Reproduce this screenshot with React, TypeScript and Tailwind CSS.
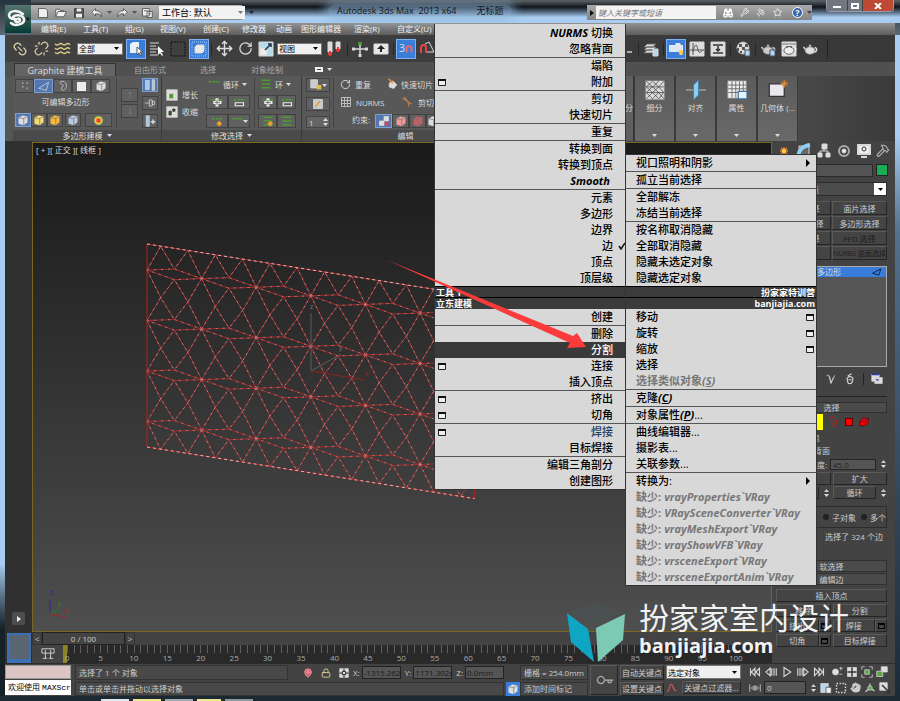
import React from 'react';
import { Star, Wrench, Binoculars, Satellite, Link2, Unlink, Move, RotateCw, MapPin, Lock, Hand, Hammer, Key, Waves } from 'lucide-react';

interface MenuEntry {
  label: string;
  latin?: string;
  hotkey?: string;
  tail?: string;
  box?: boolean;
  arrow?: boolean;
  check?: boolean;
  active?: boolean;
  disabled?: boolean;
  tone?: string;
}

const menuItems = [
  { label: '编辑(E)', width: 'w-[42px]' },
  { label: '工具(T)', width: 'w-[42px]' },
  { label: '组(G)', width: 'w-[35px]' },
  { label: '视图(V)', width: 'w-[43px]' },
  { label: '创建(C)', width: 'w-[39px]' },
  { label: '修改器', width: 'w-[34px]' },
  { label: '动画', width: 'w-[25px]' },
  { label: '图形编辑器', width: 'w-[53px]' },
  { label: '渲染(R)', width: 'w-[43px]' },
  { label: '自定义(U)', width: 'w-[43px]' },
];

const leftTop: MenuEntry[][] = [
  [{ label: '切换', latin: 'NURMS' }, { label: '忽略背面' }],
  [{ label: '塌陷' }, { label: '附加', box: true }],
  [{ label: '剪切' }, { label: '快速切片' }],
  [{ label: '重复' }],
  [{ label: '转换到面' }, { label: '转换到顶点' }, { label: '', latin: 'Smooth' }],
  [
    { label: '元素' },
    { label: '多边形' },
    { label: '边界' },
    { label: '边', check: true },
    { label: '顶点' },
    { label: '顶层级' },
  ],
];

const leftBottom: MenuEntry[][] = [
  [{ label: '创建' }],
  [{ label: '删除' }, { label: '分割', active: true }, { label: '连接', box: true }, { label: '插入顶点' }],
  [{ label: '挤出', box: true }, { label: '切角', box: true }],
  [{ label: '焊接', box: true, tone: 'text-[#24405e]' }, { label: '目标焊接' }],
  [{ label: '编辑三角剖分' }, { label: '创建图形' }],
];

const rightTop: MenuEntry[][] = [
  [{ label: '视口照明和阴影', arrow: true }],
  [{ label: '孤立当前选择' }],
  [{ label: '全部解冻' }, { label: '冻结当前选择' }],
  [{ label: '按名称取消隐藏' }, { label: '全部取消隐藏' }, { label: '隐藏未选定对象' }, { label: '隐藏选定对象' }],
];

const rightBottom: MenuEntry[][] = [
  [
    { label: '移动', box: true },
    { label: '旋转', box: true },
    { label: '缩放', box: true },
    { label: '选择' },
    { label: '选择类似对象', hotkey: 'S', disabled: true },
  ],
  [{ label: '克隆', hotkey: 'C' }],
  [{ label: '对象属性', hotkey: 'P', tail: '...' }],
  [{ label: '曲线编辑器...' }, { label: '摄影表...' }, { label: '关联参数...' }],
  [
    { label: '转换为:', arrow: true },
    { label: '缺少:', latin: 'vrayProperties`VRay', disabled: true },
    { label: '缺少:', latin: 'VRaySceneConverter`VRay', disabled: true },
    { label: '缺少:', latin: 'vrayMeshExport`VRay', disabled: true },
    { label: '缺少:', latin: 'vrayShowVFB`VRay', disabled: true },
    { label: '缺少:', latin: 'vrsceneExport`VRay', disabled: true },
    { label: '缺少:', latin: 'vrsceneExportAnim`VRay', disabled: true },
  ],
];

const Ico: React.FC<{ children: React.ReactNode; size?: string }> = ({ children, size = 'size-4' }) => (
  <svg viewBox="0 0 16 16" className={`${size} shrink-0`} fill="none" stroke="#d8d8d8" strokeWidth="1">
    {children}
  </svg>
);

const Tool: React.FC<{ name: string; active?: boolean; children: React.ReactNode }> = ({ name, active, children }) => (
  <button
    aria-label={name}
    className={`flex h-[20px] w-[20px] shrink-0 items-center justify-center ${
      active ? 'border border-[#7db2f2] bg-[#3a7edb]' : ''
    }`}
  >
    {children}
  </button>
);

const Sep = () => <div className="mx-[1px] h-3 w-[1px] shrink-0 bg-[#252525]" />;

const Small: React.FC<{ name: string; active?: boolean; className?: string; children?: React.ReactNode }> = ({
  name,
  active,
  className = 'w-[19px]',
  children,
}) => (
  <button
    aria-label={name}
    className={`flex h-[14px] shrink-0 items-center justify-center border ${className} ${
      active ? 'border-[#7f9fd0] bg-[#5577b0]' : 'border-[#424242] bg-[#606060]'
    }`}
  >
    {children}
  </button>
);

const Drop: React.FC<{ label: string; value: string; className: string }> = ({ label, value, className }) => (
  <div className={`flex shrink-0 items-center border border-[#777] bg-[#f0f0f0] text-black ${className}`}>
    <select aria-label={label} className="min-w-0 flex-1 appearance-none bg-transparent pl-[1px] text-[8px] leading-[11px] outline-none">
      <option>{value}</option>
    </select>
    <Caret className="mr-[3px] text-black" />
  </div>
);

const Caret: React.FC<{ className?: string }> = ({ className = 'text-[#ddd]' }) => (
  <svg viewBox="0 0 5 3" className={`h-[3px] w-[5px] shrink-0 ${className}`} fill="currentColor">
    <path d="M0 0h5L2.500 3z" />
  </svg>
);

const Cube: React.FC<{ color?: string }> = ({ color = '#ddd' }) => (
  <Ico size="size-3">
    <path d="M2 5l5-3 7 1v8l-5 4-7-2z" fill={color} stroke="none" />
    <path d="M2 5l7 1 5-3M9 6v9" stroke="#777" />
  </Ico>
);

const EdgeBars: React.FC<{ plus?: boolean; minus?: boolean; rows?: number; spark?: boolean }> = ({ plus, minus, rows = 1, spark }) => (
  <Ico size="size-3">
    {rows === 3 ? (
      <path d="M2 3h12M2 8h12M2 13h12" stroke="#4c9a30" strokeWidth="2" />
    ) : (
      <path d="M1 5h4M6 5h4M11 5h4" stroke="#4c9a30" strokeWidth="2" />
    )}
    {plus && <path d="M8 3v11M3 8.500h11" stroke="#eee" strokeWidth="4" />}
    {plus && <path d="M8 5v7M5 8.500h7" stroke="#555" strokeWidth="1" />}
    {minus && <path d="M3 9h11v4H3z" fill="#555" stroke="#eee" strokeWidth="1.500" />}
    {spark && <path d="M11 8v7M7.500 11.500h7M9 9l4 5M13 9l-4 5" stroke="#f5a030" strokeWidth="1.500" />}
  </Ico>
);

const Pot: React.FC<{ fill?: string; stroke?: string }> = ({ fill = '#ccc', stroke = '#777' }) => (
  <>
    <path d="M12.500 7c3-1 3 4-1 4.500M4 9L1.500 6" stroke={fill} strokeWidth="1.500" />
    <ellipse cx="8" cy="9.500" rx="5" ry="3.800" fill={fill} stroke={stroke} strokeWidth=".7" />
    <path d="M5 6.500c1-1.500 5-1.500 6 0" stroke={stroke} />
    <circle cx="8" cy="4.600" r="1" fill={fill} stroke="none" />
  </>
);

const WindowMark = () => (
  <svg viewBox="0 0 8 7" className="h-[7px] w-2 shrink-0" aria-hidden="true">
    <path d="M.5.5h7v6h-7z" fill="#eee" stroke="#222" />
    <path d="M0 0h8v2H0z" fill="#111" />
  </svg>
);

const Entry: React.FC<{ item: MenuEntry; side: 'left' | 'right' }> = ({ item, side }) => {
  const cjk = item.label && <span className={item.disabled ? 'font-bold' : 'font-medium'}>{item.label}</span>;
  const latin = item.latin && <span className="font-bold italic">{item.latin}</span>;
  const color = item.active ? 'bg-[#3a3a3a] text-white' : item.disabled ? 'text-[#777]' : item.tone || 'text-black';
  return (
    <button
      role="menuitem"
      disabled={item.disabled}
      className={`flex h-4 w-full items-center whitespace-nowrap text-[11px] leading-4 ${color} ${
        side === 'left' ? 'pl-[3px]' : 'pl-[10px] pr-[2px]'
      }`}
    >
      {side === 'left' && item.box && <WindowMark />}
      <span className={`flex flex-1 gap-[3px] ${side === 'left' ? 'justify-end' : ''}`}>
        {side === 'left' && latin}
        <span>
          {cjk}
          {item.hotkey && (
            <span className="font-bold italic">
              (<u>{item.hotkey}</u>)
            </span>
          )}
          {item.tail}
        </span>
        {side === 'right' && latin}
      </span>
      {side === 'left' && (
        <span className="flex w-3 shrink-0 justify-end">
          {item.check && (
            <svg viewBox="0 0 7 8" className="h-2 w-[7px]" fill="none" stroke="#111" strokeWidth="1.500">
              <path d="M1 4l2 3 4-6" />
            </svg>
          )}
        </span>
      )}
      {side === 'right' && item.box && <WindowMark />}
      {side === 'right' && item.arrow && (
        <svg viewBox="0 0 4 8" className="mr-1 h-2 w-1" fill="#000">
          <path d="M0 0l4 4-4 4z" />
        </svg>
      )}
    </button>
  );
};

const Groups: React.FC<{ groups: MenuEntry[][]; side: 'left' | 'right' }> = ({ groups, side }) => (
  <div className="divide-y divide-[#555]">
    {groups.map((group, i) => (
      <div key={i}>
        {group.map((item) => (
          <Entry key={item.label + (item.latin || '')} item={item} side={side} />
        ))}
      </div>
    ))}
  </div>
);

const QuadTitle: React.FC<{ lines: string[]; className?: string }> = ({ lines, className = '' }) => (
  <div className={`divide-y divide-black border-t border-black bg-[#3b3b3b] text-[9px] leading-[11px] font-bold text-white ${className}`}>
    {lines.map((line) => (
      <div key={line} className="h-[11px] px-[1px]">{line}</div>
    ))}
  </div>
);

const TitleBar = () => (
  <div className="flex h-[23px] items-start bg-linear-to-b from-[#555c60] from-5% via-[#10171e] via-30% to-[#a9cdf2] to-75%">
    <div className="mt-[5px] flex h-[15px] w-[213px] items-center gap-[6px] rounded-r bg-linear-to-b from-[#b4b4b4] to-[#8b8b8b] pl-[6px]">
      <Ico size="size-3"><path d="M2 2h9l3 3v9H2z" fill="#eee" stroke="#444" /></Ico>
      <Ico size="size-3"><path d="M1 13l3-7h11l-3 7zM1 12V3h5l1 2h5" fill="#eee" stroke="#444" /></Ico>
      <Ico size="size-3"><path d="M2 2h12v12H2z" fill="#555" stroke="#333" /><path d="M5 2h6v4H5zM4 9h8v5H4z" fill="#eee" stroke="none" /></Ico>
      <Ico size="size-3"><path d="M1 7l5-5v3c5 0 8 2 8 8-2-4-4-4-8-4v3z" fill="#eee" stroke="#444" /></Ico>
      <Caret className="-mx-[2px] text-[#555]" />
      <Ico size="size-3"><path d="M15 7l-5-5v3c-5 0-8 2-8 8 2-4 4-4 8-4v3z" fill="#eee" stroke="#444" /></Ico>
      <Caret className="-mx-[2px] text-[#555]" />
      <Ico size="size-3"><path d="M2 2h9v10H2zM8 6h7v8H8z" fill="#eee" stroke="#444" /><path d="M4 5h5M10 9h3" stroke="#444" /></Ico>
      <div className="ml-auto flex h-[13px] w-[86px] shrink-0 items-center bg-[#f2f2f2] text-black">
        <select aria-label="工作台" className="min-w-0 flex-1 appearance-none bg-transparent pl-[3px] text-[9px] leading-[12px]">
          <option>工作台: 默认</option>
        </select>
        <Caret className="mr-[2px] text-[#777]" />
      </div>
      <Caret className="-ml-[2px] mr-[3px] text-[#222]" />
    </div>
    <div className="mt-[5px] ml-[84px] flex gap-[20px] rounded-full bg-[#8fb4d8]/50 px-[9px] text-[9px] leading-[12px] text-[#101820] shadow-[0_0_8px_4px_rgba(143,180,216,0.5)]">
      <span className="whitespace-pre">Autodesk 3ds Max  2013 x64</span>
      <span>无标题</span>
    </div>
    <div className="mt-[5px] ml-auto flex h-[15px] w-[225px] shrink-0 items-center gap-[7px] bg-linear-to-b from-[#aaa] to-[#858585] text-[#fff]">
      <svg viewBox="0 0 4 6" className="ml-[3px] h-[6px] w-1 shrink-0" fill="#111"><path d="M0 0l4 3-4 3z" /></svg>
      <input aria-label="搜索" placeholder="键入关键字或短语" className="-ml-[5px] h-[13px] w-[120px] shrink-0 bg-[#f4f4f4] px-[2px] text-[8px] italic placeholder:text-[#777]" />
      <Binoculars size={12} strokeWidth={3} />
      <Wrench size={11} />
      <Satellite size={11} />
      <Star size={11} />
      <span className="ml-[3px] flex size-[11px] shrink-0 items-center justify-center rounded-full border border-white bg-[#3763a8] text-[9px] font-bold">?</span>
      <Caret className="-ml-[3px] text-[#444]" />
    </div>
    <div className="mr-[6px] ml-[14px] flex h-3 w-[68px] shrink-0 overflow-hidden rounded-b border border-t-0 border-[#99a]">
      <button aria-label="最小化" className="flex w-5 items-end justify-center bg-[#70777e] pb-[3px]"><i className="h-[2px] w-[8px] bg-white" /></button>
      <button aria-label="还原" className="flex w-4 items-center justify-center border-x border-[#444] bg-[#70777e]"><i className="h-[6px] w-2 border-2 border-white" /></button>
      <button aria-label="关闭" className="flex flex-1 items-center justify-center bg-[#bd4a35]">
        <svg viewBox="0 0 8 6" className="h-[6px] w-2" stroke="#fff" strokeWidth="2"><path d="M1 0l6 6M7 0L1 6" /></svg>
      </button>
    </div>
  </div>
);

const Header = () => (
  <header className="flex bg-linear-to-b from-[#24333d] to-[#5d6972] pl-[5px]">
    <button aria-label="应用程序" className="mt-[5px] flex h-[28px] w-[26px] items-center justify-center bg-linear-to-b from-[#55756f] to-[#023c37]">
      <svg viewBox="0 0 24 24" className="size-6" fill="none" stroke="#f4f4f4" strokeWidth="2.500" strokeLinecap="round">
        <path d="M17 7C12 3 4 3 3 8c0 3 2 4 6 4M7 10c3-3 10-2 11 2 1 5-9 8-13 4M9 14c1 2 5 1 5-1s-4-2-5 1" />
        <path d="M21 11l2 0-1 2z" fill="#111" stroke="#111" strokeWidth="1" />
      </svg>
    </button>
    <div className="min-w-0 flex-1">
      <TitleBar />
      <nav className="mr-[5px] flex h-3 items-center bg-linear-to-b from-[#929292] to-[#5d5d5d] pl-[10px] text-[8px] leading-3 text-[#f4f4f4]">
        {menuItems.map((m) => (
          <button key={m.label} className={`shrink-0 text-left whitespace-nowrap ${m.width}`}>{m.label}</button>
        ))}
      </nav>
    </div>
  </header>
);

const MainToolbar = () => (
  <div className="flex h-[27px] items-center gap-[1px] bg-linear-to-r from-[#414141] to-[#383838] pl-[5px] text-[#ddd]">
    <Tool name="链接"><Link2 size={16} className="rotate-45 text-[#d6cda7]" /></Tool>
    <Tool name="取消链接"><Unlink size={15} className="text-[#d6cda7]" /></Tool>
    <Tool name="绑定"><Waves size={17} className="text-[#e0c887]" /></Tool>
    <Drop label="选择过滤器" value="全部" className="mr-[2px] ml-[4px] h-3 w-[46px]" />
    <Tool name="选择对象" active>
      <Ico><path d="M2 3l3-2h6v9l-2 2H2z" fill="#e8f2fb" stroke="none" /><path d="M9 6v8l2-2 2 3 1-1-2-3h3z" fill="#fff" stroke="#555" /></Ico>
    </Tool>
    <Tool name="按名称选择"><Ico><path d="M1 2h9M1 5h6M1 8h8M1 11h6M1 14h8" /><path d="M9 5v9l2-2 2 3 1-1-2-3h3z" fill="#fff" stroke="none" /></Ico></Tool>
    <Tool name="矩形选择"><Ico><path d="M1 1h14v14H1z" stroke="#111" strokeDasharray="2 1" /></Ico></Tool>
    <Tool name="窗口交叉" active><Ico><path d="M1 1h14v14H1z" stroke="#a8cdf5" strokeDasharray="1 1" /><path d="M4 6l2-2h7v6l-2 2H4z" fill="#e8e8e8" /></Ico></Tool>
    <Sep />
    <Tool name="移动"><Move size={17} /></Tool>
    <Tool name="旋转"><RotateCw size={15} /></Tool>
    <Tool name="缩放"><Ico><path d="M1 1h14v14H1z" fill="#b6dceb" /><path d="M2 7h7v7H2z" fill="#eee" /><path d="M7 9l6-6M10 3h3v3" stroke="#234" strokeWidth="1.500" /></Ico></Tool>
    <Drop label="参考坐标系" value="视图" className="mr-[2px] h-3 w-[45px]" />
    <Tool name="轴心"><Ico><path d="M1 1h4v10H1zM9 1h4v7H9z" fill="#ddd" /><path d="M3 10v5M11 6v5M1 13h4M9 9h4" stroke="#e33" strokeWidth="2" /></Ico></Tool>
    <Sep />
    <Tool name="操纵"><Ico><path d="M8 3v11M2 8h12" strokeWidth="1.500" /><path d="M6 1h4v3H6z" fill="#4c9a30" stroke="none" /><path d="M0 8h3M13 8h3M8 13v3" strokeWidth="3" /></Ico></Tool>
    <Tool name="键盘覆盖"><Ico><path d="M1 3h14v10H1z" fill="#e8e8e8" /><path d="M8 4L4 8h3v3h2V8h3z" fill="#222" stroke="none" /></Ico></Tool>
    <Sep />
    <Tool name="捕捉开关" active><span className="text-[11px]">3</span><Ico size="size-2"><path d="M3 15V7c0-6 10-6 10 0v8" stroke="#e76a6a" strokeWidth="4" /></Ico></Tool>
    <Tool name="角度捕捉"><Ico><path d="M2 12V7c0-4 5-4 5 0v5" stroke="#e04444" strokeWidth="2" /><path d="M6 3l4-2 5 10H8" /></Ico></Tool>
    <div className="ml-auto flex w-[203px] items-center gap-[1px] border-r border-[#222] pl-[2px]">
      <span className="mr-1 h-2 w-[5px] border-b-2 border-[#aaa]" />
      <Sep />
      <Tool name="层"><Ico><path d="M4 3h9l-3 3H1zM4 6h9l-3 3H1zM4 9h9l-3 3H1z" fill="#ddd" stroke="#666" /><path d="M10 8h5v7h-5z" fill="#b8d7ef" /></Ico></Tool>
      <Sep />
      <Tool name="石墨工具" active><Ico><path d="M1 4h6l1-2h4l1 2h2v7H1z" fill="#dfe8f2" stroke="none" /><path d="M13 9v5M11 11h4" stroke="#ffcb4d" strokeWidth="3" /></Ico></Tool>
      <Tool name="曲线编辑器"><Ico><path d="M1 1h14v14H1z" fill="#ddd" /><path d="M1 9h14M4 2v12M4 11c3-12 4-6 5-2s3 2 5 0" stroke="#555" /></Ico></Tool>
      <Tool name="图解视图"><Ico><path d="M1 1h14v14H1z" fill="#ddd" /><path d="M3 4h10M3 12h10M8 5v5M6 8l2 2 2-2" stroke="#333" strokeWidth="1.500" /></Ico></Tool>
      <Sep />
      <Tool name="材质"><Ico><circle cx="8" cy="7" r="6" fill="#ddd" stroke="#bbb" /><path d="M4 3h3v3H4zM10 3h3v3h-3zM7 6h3v3H7zM2 7h2v3H2zM5 10h2v2H5z" fill="#555" stroke="none" /><path d="M10 9h5v6h-5z" fill="#b8d7ef" stroke="#456" /></Ico></Tool>
      <Sep />
      <Tool name="渲染设置"><Ico><Pot /><path d="M10 9h5v6h-5z" fill="#b8d7ef" stroke="#456" /></Ico></Tool>
      <Tool name="渲染帧窗口"><Ico><path d="M1 1h14v14H1z" fill="#ddd" /><path d="M1 3h14" stroke="#777" /><Pot fill="#eee" stroke="#333" /></Ico></Tool>
      <Tool name="渲染"><Ico><Pot fill="#ddd" /></Ico></Tool>
    </div>
    <div className="w-[66px] shrink-0" />
  </div>
);

const RibbonPanel: React.FC<{ title: string; caret?: boolean; className: string; children: React.ReactNode }> = ({ title, caret = true, className, children }) => (
  <section className={`flex shrink-0 flex-col border-r border-[#3b3b3b] bg-[#585858] ${className}`}>
    <div className="flex flex-1 gap-1 p-[2px]">{children}</div>
    <div className="flex h-[11px] items-center justify-center gap-1 bg-[#4a4a4a] text-[8px] leading-[11px]">
      {title}
      {caret && <Caret />}
    </div>
  </section>
);

const bigButtons = [
  { label: '细分', icon: <><path d="M1 1h14v14H1z" fill="#ddd" /><path d="M1 5.500h14M1 10h14M1 1l5 4.500L1 10l5 5M6 15l5-5-5-4.500L11 1M6 1l5 4.500M15 1l-4 4.500L15 10l-4 5M11 10l4 5M1 5.500L6 1M6 10l5-4.500M1 15l5-5-5-4.500M11 15l-5-5" stroke="#444" strokeWidth=".6" /></> },
  { label: '对齐', icon: <><path d="M0 8h16" stroke="#aaa" /><path d="M6 4l4-4v12l-4 4z" fill="#8ccdf2" stroke="#3a7db0" strokeWidth=".7" /></> },
  { label: '属性', icon: <><path d="M1 1h14v13H1z" fill="#eee" /><path d="M1 4h14M1 7h14M1 10h14M4 1v13M7 1v13M10 1v13M13 1v13" stroke="#666" strokeWidth=".7" /><path d="M9 9h7v6H9z" fill="#e8f3fb" stroke="#4376a8" /></> },
  { label: '几何体 (...', icon: <><path d="M1 3h12v10H1z" fill="#e8e8ee" stroke="#333" /><path d="M13 0v6M10 3h6M11 1l4 4M15 1l-4 4" stroke="#f09030" strokeWidth=".8" /></> },
];

const Ribbon = () => (
  <div className="bg-[#444] text-[8px] leading-[11px] text-[#ddd]">
    <div className="flex h-[14px] items-end bg-[#505050] pl-[9px] text-[#aaa]">
      <button className="h-[13px] w-[102px] border border-b-0 border-[#333] bg-[#646464] text-[9px] text-[#ddd]">Graphite 建模工具</button>
      <button className="ml-[18px] h-[14px]">自由形式</button>
      <button className="ml-[34px] h-[14px]">选择</button>
      <button className="ml-[35px] h-[14px]">对象绘制</button>
      <span className="mb-[4px] ml-[32px] flex items-center gap-1"><i className="h-[5px] w-2 border-2 border-[#eee] bg-[#444]" /><Caret /></span>
    </div>
    <div className="flex h-[65px] justify-between bg-linear-to-r from-[#555] via-[#555] via-80% to-[#3a3a3a]">
      <div className="flex pl-[8px]">
        <RibbonPanel title="多边形建模" className="w-[149px]">
          <div className="flex w-[102px] flex-col justify-between border-r border-[#444] py-[1px]">
            <div className="flex">
              <Small name="顶点"><Ico size="size-3"><path d="M4 4h2M10 4h2M4 9h2M10 11h2" stroke="#aaa" strokeWidth="2" /></Ico></Small>
              <Small name="边" active><Ico size="size-3"><path d="M1 11L14 3l-3 11z" /></Ico></Small>
              <Small name="边界"><Ico size="size-3"><path d="M5 2c8-2 9 7 6 10-3 3-5 2-5-1s4-2 2-4-5-2-3-5z" /></Ico></Small>
              <Small name="多边形"><i className="size-[9px] bg-[#eee]" /></Small>
              <Small name="元素"><Cube /></Small>
            </div>
            <div className="-mt-[3px] text-center">可编辑多边形</div>
            <div className="flex">
              <Small name="预览关闭" active className="w-4"><Cube /></Small>
              <Small name="预览子对象" className="w-4"><Cube color="#f4dd72" /></Small>
              <Small name="预览多个" className="mr-[2px] w-4"><Cube color="#f7b73c" /></Small>
              <Small name="忽略背面" className="mr-1 w-4"><Cube color="#b9cbe0" /></Small>
              <Small name="软选择" className="w-[27px]"><i className="size-[9px] rounded-full bg-radial from-[#f04030] from-25% via-[#f0d040] via-50% to-[#50b860] to-75%" /></Small>
            </div>
          </div>
          <div className="flex flex-col justify-center gap-[2px]">
            <Small name="上一修改器" className="w-[17px]"><Ico size="size-2"><path d="M8 14V2M5 5l3-3 3 3" stroke="#888" /></Ico></Small>
            <Small name="下一修改器" className="w-[17px]"><Ico size="size-2"><path d="M8 2v12M5 11l3 3 3-3" stroke="#888" /></Ico></Small>
          </div>
          <div className="flex flex-col justify-between">
            <Small name="显示结果" active className="w-4"><Ico size="size-3"><path d="M2 2h5v12H2zM11 1h3v14h-3z" fill="#9bc8ec" /></Ico></Small>
            <Small name="固定堆栈" className="w-4"><Ico size="size-3"><path d="M1 8h6M7 4v8h4V4zM11 6h3v4h-3z" /></Ico></Small>
            <Small name="塌陷堆栈" className="w-4"><Ico size="size-3"><path d="M3 1h4v14H3z" fill="#9bc8ec" /><path d="M9 9h6M12 6v6" strokeWidth="2" /></Ico></Small>
          </div>
        </RibbonPanel>
        <RibbonPanel title="修改选择" className="w-[140px]">
          <div className="flex w-[38px] shrink-0 flex-col justify-center gap-[5px] pl-[2px]">
            <button className="flex items-center gap-1 whitespace-nowrap"><Ico size="size-3"><path d="M1 1h14v14H1z" fill="#ddd" /><path d="M4 6h6v7H4z" fill="#4c9a30" /></Ico>增长</button>
            <button className="flex items-center gap-1 whitespace-nowrap"><Ico size="size-3"><path d="M1 1h14v14H1z" fill="#ddd" /><path d="M4 7h3v5H4zM9 4h3v3H9z" fill="#397522" stroke="#222" /></Ico>收缩</button>
          </div>
          <div className="flex w-[44px] shrink-0 flex-col justify-between">
            <div className="flex items-center gap-[3px] pl-[2px]"><EdgeBars />循环 <Caret /></div>
            <div className="flex"><Small name="循环扩大" className="w-[22px]"><EdgeBars plus /></Small><Small name="循环收缩" className="w-[22px]"><EdgeBars minus /></Small></div>
            <div className="flex"><Small name="循环插入" className="w-[22px]"><EdgeBars spark /></Small><Small name="循环点" className="w-[22px]"><EdgeBars /><Caret /></Small></div>
          </div>
          <div className="flex flex-1 flex-col justify-between border-l border-[#444] pl-[3px]">
            <div className="flex items-center gap-[3px] pl-[2px]"><EdgeBars rows={3} />环 <Caret /></div>
            <div className="flex"><Small name="环扩大"><EdgeBars plus /></Small><Small name="环收缩"><EdgeBars minus /></Small></div>
            <div className="flex"><Small name="环插入"><EdgeBars rows={3} spark /></Small><Small name="环点"><EdgeBars rows={3} /></Small></div>
          </div>
        </RibbonPanel>
        <RibbonPanel title="编辑" caret={false} className="w-[208px]">
          <div className="ml-[2px] flex flex-col justify-between border-r border-[#444] pr-[3px]">
            <Small name="保留UV" className="w-6"><Ico size="size-3"><path d="M1 1h9v11H1z" fill="#ccc" /><path d="M9 8h6v6H9z" fill="#ddbd45" stroke="none" /></Ico><Caret /></Small>
            <Small name="扭曲" className="w-6"><Ico size="size-3"><path d="M2 2h12v12H2z" fill="#ccc" /><path d="M4 12l7-8" stroke="#f0963b" strokeWidth="2" /></Ico></Small>
            <div className="flex h-[12px] w-6 items-center border border-[#444] bg-[#656565]">
              <input aria-label="迭代次数" defaultValue="1" className="min-w-0 flex-1 px-[2px] text-[8px]" />
              <Spin />
            </div>
          </div>
          <div className="ml-[2px] grid w-[94px] shrink-0 grid-cols-2 content-between gap-x-0 whitespace-nowrap">
            <button className="flex items-center gap-1"><RotateCw size={11} />重复</button>
            <button className="flex items-center gap-[2px]"><Ico size="size-3"><path d="M3 7l5-3 5 5-4 5-6-2z" fill="#ddd" /><path d="M2 1l6 6" stroke="#ef9233" strokeWidth="2" /></Ico>快速切片</button>
            <button className="flex items-center gap-1"><Ico size="size-3"><path d="M2 2h12v12H2zM2 6h12M2 10h12M6 2v12M10 2v12" /></Ico>NURMS</button>
            <button className="flex items-center justify-end gap-1"><Ico size="size-3"><path d="M1 3l12 8M3 1l5 7 1 6" stroke="#c67c50" strokeWidth="1.500" /></Ico>剪切</button>
            <span className="pl-3">约束:</span>
            <div className="-ml-[12px] flex">
              <Small name="约束无" active className="w-[17px]"><Ico size="size-3"><path d="M2 8h6v6H2zM8 2h6v6H8z" fill="#ddd" /><path d="M9 9l5 5M14 9l-5 5" stroke="#ed3b3b" strokeWidth="2" /></Ico></Small>
              <Small name="约束边" className="w-[17px]"><Cube color="#ed9d9d" /></Small>
              <Small name="约束面" className="w-[17px]"><Cube color="#c95c5c" /></Small>
              <Small name="约束法线" className="w-[14px]"><Cube /></Small>
            </div>
          </div>
        </RibbonPanel>
      </div>
      <div className="mr-[97px] flex">
        <div className="w-[23px] overflow-hidden border-r border-[#333] bg-[#5f5f5f] pt-[26px] text-right">分</div>
        {bigButtons.map((b) => (
          <button key={b.label} className="flex w-[41px] flex-col items-center justify-between overflow-hidden border-x border-[#3a3a3a] bg-linear-to-b from-[#5b5b5b] to-[#696969] pt-[4px] pb-[4px] whitespace-nowrap">
            <Ico size="size-5">{b.icon}</Ico>
            <span className="-mt-[20px]">{b.label}</span>
            <Caret />
          </button>
        ))}
      </div>
    </div>
  </div>
);

// Triangulated grid: hub vertices every column, sheared by the orthographic tilt.
const COL = 54.6;
const SHEAR = 8.6;
const hubRows = [26, 76.5, 127, 177.5];
const midRows = [0, 51.5, 102, 152.500, 203];

const at = (u: number, v: number) => `${(114 + u * COL).toFixed(1)} ${(101 + v + u * SHEAR).toFixed(1)}`;

const buildMesh = () => {
  let steep = '';
  let flat = '';
  for (let c = 0; c < 6; c++) {
    hubRows.forEach((v, r) => {
      const up = at(c + 0.5, v - 5.3);
      const down = at(c + 0.5, v + 5.3);
      flat += `M${at(c, v)}L${up}L${at(c + 1, v)}L${down}Z`;
      [c + 0.25, c + 0.75].forEach((m, i) => {
        const hub = at(c + i, v);
        steep += `M${hub}L${at(m, midRows[r])}L${up}M${hub}L${at(m, midRows[r + 1])}L${down}`;
      });
    });
  }
  return { steep, flat };
};

const mesh = buildMesh();
const outline = `M${at(0, 0)}L${at(6, 0)}L${at(6, 203)}L${at(0, 203)}Z`;

const Viewport = () => (
  <div className="relative flex-1 overflow-hidden border border-[#7c651f] bg-linear-to-b from-[#1a1a1a] to-[#4f4f4f]">
    <div className="px-[3px] pt-[1px] text-[8px] leading-[11px] whitespace-pre text-[#ddd]">[ + ][ 正交 ][ 线框 ]</div>
    <svg className="absolute inset-0 size-full" fill="none" aria-label="视口">
      <path d={mesh.steep} stroke="#a83232" />
      <path d={mesh.steep} stroke="#c8a8a8" strokeDasharray="2 4" strokeWidth=".7" />
      <path d={mesh.flat} stroke="#a82828" />
      <path d={mesh.flat} stroke="#c09898" strokeDasharray="2 5" strokeWidth=".7" />
      <path d={outline} stroke="#b02222" />
      <path d={`M${at(0, 0)}L${at(6, 0)}M${at(0, 203)}L${at(6, 203)}`} stroke="#dcbcbc" strokeDasharray="3 3" />
      <path d="M278 228v-58M278 228l30-17" stroke="#5c5c5c" />
      <path d="M278 228l54 9" stroke="#8d2020" />
      <g fontSize="7" fontFamily="Open Sans">
        <text x="277" y="166" fill="#777">z</text>
        <text x="306" y="207" fill="#777">y</text>
        <text x="332" y="233" fill="#a02525">x</text>
        <text x="17" y="452" fill="#2626b0">z</text>
        <text x="25" y="463" fill="#248424">y</text>
        <text x="31" y="470" fill="#b02424">x</text>
      </g>
      <path d="M17 471v-15" stroke="#2626a0" />
      <path d="M17 471l8-4" stroke="#248424" />
      <path d="M17 471l15 3" stroke="#a02424" />
    </svg>
  </div>
);

const TimeTrack = () => (
  <>
    <div className="flex h-[13px] items-center bg-[#434343] text-[8px] leading-[11px] text-[#ccc]">
      <button className="w-[10px] border border-[#333]">&lt;</button>
      <button className="w-[83px] border border-[#222] bg-[#444]">0 / 100</button>
      <button className="w-[10px] border border-[#333]">&gt;</button>
    </div>
    <div className="flex h-[18px] bg-[#292929]">
      <div className="flex w-[31px] items-center justify-center bg-[#434343]">
        <Ico size="size-[14px]"><path d="M1 2h14v5H1zM5 7v6M11 7v6M2 13h5M9 13h5M5 3v4M11 3v4" /></Ico>
      </div>
      <div className="w-1 shrink-0 bg-[#8d8425]" />
      <div className="mr-[36px] flex flex-1 flex-col">
        <div className="flex h-2 justify-between">
          {Array.from({ length: 101 }, (_, i) => <i key={i} className="w-[1px] bg-[#5e5e5e]" />)}
        </div>
        <div className="flex justify-between text-[8px] leading-[9px] text-[#aaa]">
          {Array.from({ length: 21 }, (_, i) => <span key={i} className="flex w-0 justify-center">{i * 5}</span>)}
        </div>
      </div>
    </div>
  </>
);

const PBtn: React.FC<{ children?: React.ReactNode; className?: string }> = ({ children, className = '' }) => (
  <button className={`h-[13px] overflow-hidden border border-t-[#5a5a5a] border-r-[#252525] border-b-[#252525] border-l-[#5a5a5a] bg-[#444] whitespace-nowrap ${className}`}>
    {children}
  </button>
);

const selectors = ['网格选择', '面片选择', '样条线选择', '多边形选择', '体积选择', 'FFD 选择', ''];

const Spin = () => (
  <span className="flex w-[8px] shrink-0 flex-col items-center gap-[2px]">
    <Caret className="rotate-180" />
    <Caret />
  </span>
);

const CommandPanel = () => (
  <aside className="flex w-[123px] shrink-0 flex-col overflow-hidden bg-[#434343] pr-[8px] pl-[4px] text-[8px] leading-[11px] text-[#ccc]">
    <div className="-mr-[3px] flex h-[18px] items-center gap-[4px] pt-[1px]">
      <Ico><path d="M8 4v8M4 8h8M5 5l6 6M11 5l-6 6" stroke="#e98824" strokeWidth="1.500" /><circle cx="8" cy="8" r="2" fill="#ffd060" stroke="none" /></Ico>
      <Ico><path d="M3 3h10v10H3z" fill="#666" /><path d="M2 14C3 7 6 3 14 2" stroke="#8ed0f4" strokeWidth="4" /></Ico>
      <Ico><path d="M6 1h5v5H6zM2 10h4v4H2zM10 10h4v4h-4z" fill="#ddd" /><path d="M8 6v2M4 10V8h8v2" /></Ico>
      <Ico><circle cx="8" cy="8" r="5" strokeWidth="2" stroke="#aaa" /><circle cx="8" cy="8" r="2" fill="#eee" /></Ico>
      <Ico><path d="M2 2h12v9H2zM5 14h6" fill="#eee" strokeWidth="2" /><circle cx="8" cy="6" r="2" stroke="#333" /></Ico>
      <Hammer size={15} className="text-[#aaa]" />
    </div>
    <div className="flex h-[22px] items-center gap-[3px]">
      <input aria-label="名称" className="h-[13px] min-w-0 flex-1 border border-[#292929] bg-[#545454]" />
      <button aria-label="颜色" className="mr-[-1px] size-3 border border-[#222] bg-[#19ad58]" />
    </div>
    <div className="mt-[1px] flex h-[14px] border border-[#2b2b2b] bg-[#4c4c4c]">
      <select aria-label="修改器列表" className="min-w-0 flex-1 appearance-none pl-[2px]"><option>修改器列表</option></select>
      <span className="flex w-3 items-center justify-center bg-white"><Caret className="text-black" /></span>
    </div>
    <div className="mt-[5px] grid grid-cols-2 gap-[1px]">
      {selectors.map((s, i) => (
        <PBtn key={i} className={i < 5 ? 'h-[14px]' : 'h-[14px] text-[#1d1d1d]'}>{s}</PBtn>
      ))}
      <PBtn className="h-[14px] text-[7px] text-[#1d1d1d]">NURBS 曲面选择</PBtn>
    </div>
    <div className="mt-[6px] h-[101px] border border-[#aaa] bg-[#565656]">
      <div className="flex h-[10px] items-center justify-between bg-[#397dda] pr-1 pl-[16px] leading-[10px] text-[#ddd]">
        可编辑多边形
        <Ico size="size-[10px]"><path d="M1 10L14 3l-3 10z" stroke="#123" strokeWidth="1.500" /></Ico>
      </div>
    </div>
    <div className="flex h-[23px] items-center justify-end gap-[7px] pr-[4px]">
      <Ico size="size-3"><path d="M2 3l3 0 3 11 5-11M6 4l2 9 3-7" /></Ico>
      <Ico size="size-3"><path d="M4 7c2-3 6-3 8 0l-1 5c-1 3-6 3-6 0zM5 4l5-3M6 9h4" strokeWidth="1.500" /></Ico>
      <i className="h-3 w-[1px] bg-[#222]" />
      <Ico size="size-3"><path d="M1 2h10v9H1zM5 6h10v8H5z" fill="#ddd" stroke="#ccc" /><path d="M1 2h10M7 9h3" stroke="#33b" strokeWidth="2" /></Ico>
    </div>
    <div className="mt-[6px] border-t border-[#222] pt-[5px]">
      <div className="flex h-[11px] items-center justify-center border border-[#303030] bg-[#4b4b4b]">选择</div>
      <div className="flex h-[18px] items-center justify-end gap-[5px] pr-[17px]">
        <i className="h-4 w-[10px] bg-[#ffff00]" />
        <Ico size="size-3"><path d="M4 2c8-2 9 7 6 10-3 3-6 2-5-1s4-2 2-4-5-2-3-5z" stroke="#d02020" /></Ico>
        <i className="size-2 border border-[#600] bg-[#f00]" />
        <Ico size="size-3"><path d="M2 7l4-4h8v6l-4 4H2z" fill="#e00" stroke="#501010" /><path d="M2 7h8l4-4M10 7v6" stroke="#501050" /></Ico>
      </div>
      <label className="flex h-[13px] items-center gap-1 pl-[8px]"><input type="checkbox" className="size-2 appearance-none bg-[#555]" />按顶点</label>
      <label className="flex h-[13px] items-center gap-1 pl-[10px]"><input type="checkbox" className="size-2 appearance-none bg-[#555]" />忽略背面</label>
      <label className="flex h-[14px] items-center justify-end gap-[3px]">
        角度:
        <input defaultValue="45.0" className="h-[11px] w-[46px] border border-[#252525] bg-[#555] px-[2px] text-[8px] text-[#1e1e1e]" />
        <Spin />
      </label>
      <div className="mt-[1px] grid grid-cols-2 gap-[2px]"><PBtn>收缩</PBtn><PBtn>扩大</PBtn></div>
      <div className="mt-[1px] flex items-center gap-[3px]"><PBtn className="flex-1">环形</PBtn><Spin /><PBtn className="flex-1">循环</PBtn><Spin /></div>
      <div className="mt-[7px] flex h-[22px] items-center justify-end gap-[5px] border border-[#2c2c2c]">
        <label className="flex items-center gap-[3px]"><input type="radio" name="preview" className="size-[6px] appearance-none rounded-full bg-[#222]" />子对象</label>
        <label className="flex items-center gap-[3px]"><input type="radio" name="preview" className="size-[6px] appearance-none rounded-full bg-[#222]" />多个</label>
      </div>
      <div className="mt-[3px] h-[29px] pr-[4px] text-right">选择了 324 个边</div>
      <div className="flex h-[12px] items-center justify-center border border-[#303030] bg-[#4b4b4b]">软选择</div>
      <div className="mt-[1px] flex h-[12px] items-center justify-center border border-[#303030] bg-[#4b4b4b]">编辑边</div>
      <PBtn className="mt-[4px] w-full">插入顶点</PBtn>
      <div className="mt-[2px] grid grid-cols-2 gap-x-[2px] gap-y-[2px]">
        <PBtn>移除</PBtn>
        <PBtn>分割</PBtn>
        {['挤出', '焊接', '切角'].map((name) => (
          <div key={name} className="flex"><PBtn className="flex-1">{name}</PBtn><PBtn className="flex w-[12px] items-center justify-center"><i className="block h-[6px] w-[7px] border border-t-2 border-black" /></PBtn></div>
        ))}
        <PBtn>目标焊接</PBtn>
      </div>
    </div>
  </aside>
);

const coords = [
  { axis: 'X:', value: '-1315.262m' },
  { axis: 'Y:', value: '1171.302m' },
  { axis: 'Z:', value: '0.0mm' },
];

const playIcons = [
  'M2 3v10M8 3L3 8l5 5zM14 3L9 8l5 5z',
  'M7 3L1 8l6 5zM9 3v10M12 3v10M15 3v10',
  'M4 2l9 6-9 6z',
  'M9 3l6 5-6 5zM1 3v10M4 3v10M7 3v10',
  'M14 3v10M8 3l5 5-5 5zM2 3l5 5-5 5z',
];

const StatusBar = () => (
  <footer className="flex h-[33px] gap-[2px] border-t border-[#2c2c2c] bg-[#434343] pt-[1px] text-[8px] leading-[12px] text-[#ccc]">
    <div className="w-[66px] shrink-0 text-black">
      <div className="h-[14px] border border-[#999] bg-[#dcc5c5]" />
      <div className="mt-[1px] h-[15px] overflow-hidden bg-white pl-[3px] leading-[14px] whitespace-nowrap">欢迎使用 <span className="font-['Liberation_Mono']">MAXScr</span></div>
    </div>
    <div className="ml-[2px] flex min-w-0 flex-1 flex-col gap-[2px]">
      <div className="flex h-[15px] items-center">
        <div className="h-full min-w-0 flex-1 border border-[#333] bg-[#484848] px-[3px] leading-[13px]">选择了 1 个 对象</div>
        <div className="flex w-[216px] shrink-0 items-center justify-end gap-[4px]">
          <MapPin size={10} className="mr-[4px] shrink-0 text-[#f0a0a0]" fill="#d86070" />
          <Lock size={10} className="mr-[4px] shrink-0 text-[#f1dfa0]" />
          <Ico size="size-[10px]"><path d="M1 1h14v14H1z" fill="#ddd" /><circle cx="8" cy="8" r="3" stroke="#333" strokeWidth="2" /><path d="M8 1v3M8 12v3M1 8h3M12 8h3" stroke="#333" strokeWidth="2" /></Ico>
          {coords.map((c) => (
            <label key={c.axis} className="flex items-center gap-[2px]">
              {c.axis}
              <input defaultValue={c.value} className="h-[13px] w-[39px] border border-[#222] bg-[#555] pl-[1px] text-[8px] text-[#1c1c1c]" />
            </label>
          ))}
        </div>
      </div>
      <div className="flex h-[14px] border border-[#333] bg-[#484848]">
        <span className="flex-1 px-[3px]">单击或单击并拖动以选择对象</span>
      </div>
    </div>
    <div className="flex w-[82px] shrink-0 flex-col gap-[2px]">
      <div className="ml-[14px] h-[15px] border border-[#333] bg-[#484848] px-[3px] leading-[13px] whitespace-nowrap">栅格 = 254.0mm</div>
      <div className="flex h-[14px]">
        <button aria-label="隔离" className="flex w-[14px] items-center justify-center bg-[#3a7edb]"><Cube /></button>
        <div className="flex-1 border border-[#333] bg-[#484848] px-[3px]">添加时间标记</div>
      </div>
    </div>
    <PBtn className="flex h-[30px] w-[28px] shrink-0 items-center justify-center"><Key size={15} className="rotate-45 text-[#aaa]" /></PBtn>
    <div className="flex w-[44px] shrink-0 flex-col gap-[2px]">
      <PBtn className="h-[15px]">自动关键点</PBtn>
      <PBtn className="h-[14px]">设置关键点</PBtn>
    </div>
    <div className="flex w-[75px] shrink-0 flex-col gap-[2px]">
      <Drop label="关键点集" value="选定对象" className="h-[14px]" />
      <div className="flex items-center gap-1">
        <Ico size="size-3"><path d="M1 12c4 2 3-9 6-9s2 10 7 8" stroke="#d95959" strokeWidth="1.500" /></Ico>
        <PBtn className="flex-1">关键点过滤器...</PBtn>
      </div>
    </div>
    <div className="flex w-[152px] shrink-0 flex-col gap-[2px] pl-[6px]">
      <div className="flex h-[14px] items-center gap-1">
        {playIcons.map((d) => <Ico key={d} size="size-3"><path d={d} strokeWidth="1.500" /></Ico>)}
        <span className="flex gap-[3px] pl-[2px]">
          <Ico size="size-3"><circle cx="6" cy="8" r="4" fill="#ddd" /><path d="M11 3h5M13 1v5M11 11h4" /></Ico>
          <Ico size="size-3"><path d="M2 2h12v12H2z" fill="#ddd" /><path d="M2 8h12M8 2v12" stroke="#333" strokeWidth="2" /></Ico>
          <Ico size="size-3"><path d="M1 5V1h4M11 1h4v4M15 11v4h-4M5 15H1v-4" /><path d="M5 5h6v6H5z" fill="#58a843" /></Ico>
          <Ico size="size-3"><path d="M7 1h8v7H7z" fill="#ddd" /><path d="M1 7h8v7H1z" fill="#58a843" /></Ico>
        </span>
      </div>
      <div className="flex h-[13px] items-center gap-[3px]">
        <Ico size="size-3"><path d="M1 3v10M15 3v10M3 8l4-3v6zM13 8L9 5v6zM6 8h4" /></Ico>
        <input aria-label="当前帧" defaultValue="0" className="h-[13px] w-[42px] border border-[#222] bg-[#555] px-[2px] text-[8px]" />
        <Spin />
        <Ico size="size-3"><path d="M1 2h10v12H1z" fill="#b8d7ef" /><path d="M8 7h7v8H8z" fill="#eee" stroke="#444" /></Ico>
        <Ico size="size-3"><path d="M2 2h12v12H2z" strokeDasharray="2 2" strokeWidth="2" /></Ico>
        <Hand size={11} className="shrink-0" fill="#ccc" />
        <Ico size="size-3"><path d="M8 2v6l-6 5M8 8l6 4" strokeWidth="1.500" /><circle cx="8" cy="8" r="3" fill="#58a843" /></Ico>
        <Ico size="size-3"><path d="M1 1h10v10H1z" fill="#ddd" /><path d="M4 4l10 10M10 14h4v-4" stroke="#333" strokeWidth="2" /></Ico>
      </div>
    </div>
  </footer>
);

const QuadMenus = () => (
  <>
    <div role="menu" aria-label="工具 1" className="absolute top-[24px] left-[434px] w-[192px] border-x border-b border-[#333] bg-[#d8d8d8] pt-[1px]">
      <Groups groups={leftTop} side="left" />
      <QuadTitle lines={['工具 1', '立东建模']} />
      <Groups groups={leftBottom} side="left" />
    </div>
    <div role="menu" aria-label="变换" className="absolute top-[154px] left-[625px] w-[192px] border border-[#333] bg-[#d8d8d8]">
      <Groups groups={rightTop} side="right" />
      <QuadTitle lines={['扮家家特训营', 'banjiajia.com']} className="text-right" />
      <Groups groups={rightBottom} side="right" />
    </div>
  </>
);

const Watermark = () => (
  <div className="absolute top-[602px] left-[566px] flex gap-[13px] text-white">
    <svg viewBox="0 0 60 60" className="size-[60px]">
      <path d="M1 9L29 1l30 10-33 11z" fill="#4b5050" />
      <path d="M1 11l21 16 6 33L5 40z" fill="#0fa6c4" />
      <path d="M30 26l29-14-2 26-25 22z" fill="#7ccab3" />
    </svg>
    <div className="whitespace-nowrap text-[#f2f2f2]">
      <div className="text-[30px] leading-8">扮家家室内设计</div>
      <div className="text-[20px] leading-[24px] font-bold">banjiajia.com</div>
    </div>
  </div>
);

export default function App() {
  return (
    <div className="relative flex min-h-screen flex-col overflow-hidden bg-[#26323e] font-['Open_Sans','Noto_Sans_CJK_SC',sans-serif]">
      <Header />
      <div className="flex flex-1">
        <div className="w-[5px] shrink-0 bg-linear-to-b from-[#a8cdf0] from-80% to-[#152027] to-90%" />
        <div className="flex min-w-0 flex-1 flex-col">
          <MainToolbar />
          <Ribbon />
          <main className="flex flex-1 bg-[#434343]">
            <div className="flex w-[27px] shrink-0 flex-col items-center justify-end bg-[#303030]">
              <button aria-label="展开" className="mb-[8px] flex size-[13px] items-center justify-center rounded-xs bg-[#4d4d4d]">
                <svg viewBox="0 0 4 6" className="h-[6px] w-1" fill="#eee"><path d="M0 0l4 3-4 3z" /></svg>
              </button>
              <button aria-label="视口布局" className="h-[30px] w-[24px] border-2 border-b-4 border-[#3c6fb5] bg-[#596570]" />
            </div>
            <div className="flex min-w-0 flex-1 flex-col pt-[1px]">
              <Viewport />
              <TimeTrack />
            </div>
            <CommandPanel />
          </main>
          <StatusBar />
        </div>
        <div className="w-[5px] shrink-0 bg-linear-to-b from-[#a8cdf0] from-15% via-[#53708c] via-30% to-[#1d2a38]" />
      </div>
      <div className="flex h-[5px] items-end gap-1 bg-[#1c2932] pl-[101px]">
        <i className="h-[2px] w-7 bg-[#dfe5e8]" />
        <i className="h-[2px] w-7 bg-[#eee98a]" />
        <i className="h-[2px] w-7 bg-[#a3abb0]" />
        <i className="h-[2px] w-6 bg-[#eee98a]" />
        <i className="h-[2px] w-7 bg-[#8d989e]" />
      </div>
      <QuadMenus />
      <svg viewBox="0 0 200 90" className="pointer-events-none absolute top-[260px] left-[387px] h-[90px] w-[200px]" fill="#fb3b3b">
        <path d="M0 0l186 76 4-3 9 14-19 1 3-5z" />
      </svg>
      <Watermark />
    </div>
  );
}
